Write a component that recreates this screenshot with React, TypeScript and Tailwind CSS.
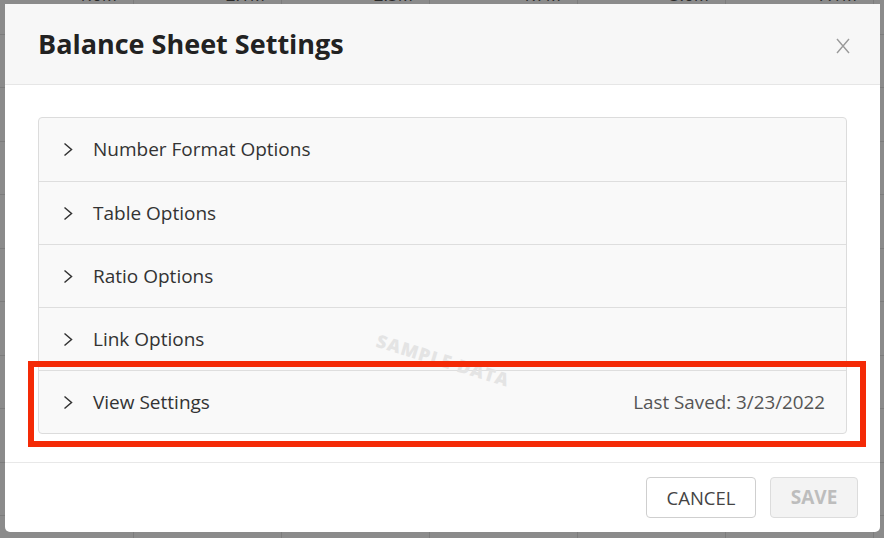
const sections = [
  "Number Format Options",
  "Table Options",
  "Ratio Options",
  "Link Options",
  "View Settings",
];

const topFigures = ["1.6M", "2.1M", "2.5M", "1.7M", "3.6M", "7.1M", ""];

function BackgroundTable() {
  // the report table behind the dialog, only its grid lines show
  const rows = Array.from({ length: 11 });
  return (
    <div className="absolute inset-0 -ml-[14px] -mt-[19px]">
      {rows.map((_, r) => (
        <div key={r} className="flex h-[53.5px] border-b border-[#7c7c7c]">
          {topFigures.map((f, c) => (
            <div
              key={c}
              className="w-[148px] shrink-0 border-r border-[#7c7c7c] pt-[4px] pr-[16px] text-right text-[17px] leading-[20px] text-[#2a2a2a]"
            >
              {r === 0 ? f : ""}
            </div>
          ))}
        </div>
      ))}
    </div>
  );
}

function Chevron() {
  return (
    <svg width="10" height="15" viewBox="0 0 10 15" className="mr-[20px] shrink-0">
      <path d="M1.5 1.5 L8.5 7.5 L1.5 13.5" stroke="#333" strokeWidth="1.5" fill="none" />
    </svg>
  );
}

export default function App() {
  return (
    <div
      className="relative w-[884px] h-[538px] overflow-hidden bg-[#8b8b8b]"
      style={{ fontFamily: '"Open Sans", "Noto Sans", sans-serif' }}
    >
      <BackgroundTable />

      {/* dialog */}
      <div className="absolute left-[5px] top-[4px] w-[875px] h-[528px] flex flex-col bg-white rounded-b-[5px] overflow-hidden">
        <div className="h-[81px] shrink-0 flex items-center justify-between bg-[#f7f7f7] border-b border-[#e6e6e6] pl-[33px] pr-[30px]">
          <h1 className="text-[27px] font-bold text-[#222]">Balance Sheet Settings</h1>
          <svg width="14" height="16" viewBox="0 0 14 16" className="mt-[4px]">
            <path d="M1 1 L13 15 M13 1 L1 15" stroke="#9a9a9a" strokeWidth="1.4" fill="none" />
          </svg>
        </div>

        <div className="flex-1 px-[33px] pt-[32px]">
          <div className="border border-[#dcdcdc] rounded-[4px] bg-[#f9f9f9]">
            {sections.map((s, i) => (
              <div
                key={s}
                className={
                  "h-[63px] flex items-center pl-[24px] pr-[21px] " +
                  (i > 0 ? "border-t border-[#dedede]" : "")
                }
              >
                <Chevron />
                <span className="text-[19px] text-[#333]">{s}</span>
                {s === "View Settings" && (
                  <span className="ml-auto text-[18.8px] text-[#555]">Last Saved: 3/23/2022</span>
                )}
              </div>
            ))}
          </div>
        </div>

        <div className="h-[70px] shrink-0 border-t border-[#e8e8e8] flex items-center justify-end gap-[14px] pr-[22px]">
          <button className="w-[110px] h-[41px] rounded-[4px] border border-[#cfcfcf] bg-white text-[18.5px] text-[#444]">
            CANCEL
          </button>
          <button className="w-[88px] h-[41px] rounded-[4px] border border-[#dcdcdc] bg-[#f3f3f3] text-[19px] font-bold text-[#bdbdbd]">
            SAVE
          </button>
        </div>
      </div>

      {/* watermark */}
      <div className="absolute left-[374px] top-[347px] rotate-[17deg] text-[18px] font-extrabold tracking-[1px] text-[#e4e4e4] select-none">
        SAMPLE DATA
      </div>

      {/* annotation box */}
      <div className="absolute left-[28px] top-[361px] w-[838px] h-[86px] border-[6px] border-[#f42a06]" />
    </div>
  );
}
